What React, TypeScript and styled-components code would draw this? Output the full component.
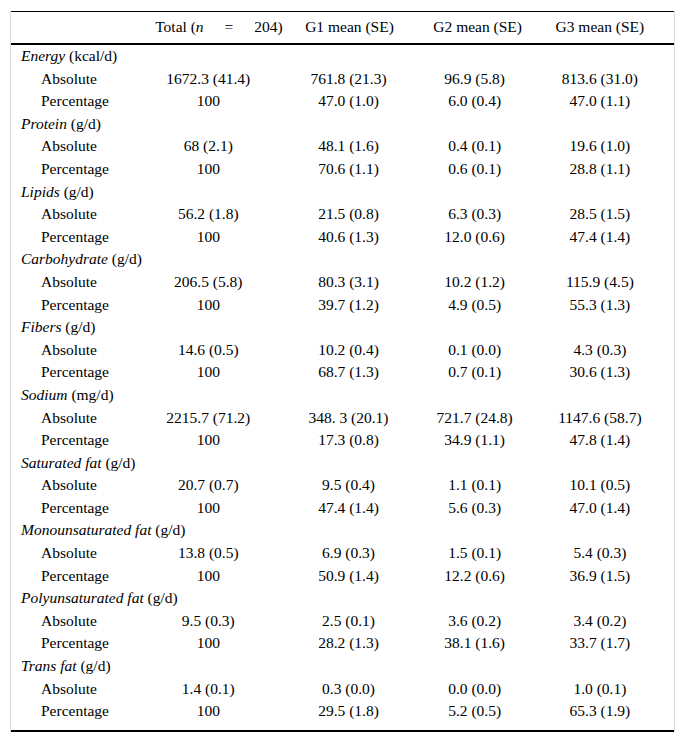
import React from "react";
import styled, { createGlobalStyle } from "styled-components";

const Global = createGlobalStyle`
  html, body { margin: 0; padding: 0; background: #fff; }
  body { font-family: "Liberation Serif", "Times New Roman", serif; color: #000; }
`;

const serif = `"Liberation Serif", "Times New Roman", serif`;

const Frame = styled.div`
  margin: 11px 0 0 10px;
  width: 663px;
  border-left: 1px solid #dcdcdc;
  border-right: 1px solid #dcdcdc;
`;

const Table = styled.table`
  width: 100%;
  border-collapse: collapse;
  table-layout: fixed;
  font-family: ${serif};
  font-size: 15.5px;
  color: #000;
  border-top: 1px solid #000;
`;

const HeadRow = styled.tr`
  border-bottom: 2px solid #000;
`;

const Th = styled.th<{ $shift?: number; $left?: boolean }>`
  font-family: ${serif};
  font-size: 15.5px;
  font-weight: normal;
  text-align: ${(p) => (p.$left ? "left" : "center")};
  height: 30px;
  padding: 0 0 1px ${(p) => p.$shift ?? 0}px;
  white-space: nowrap;
`;

const Eq = styled.span`
  margin: 0 21px 0 21px;
`;

const Body = styled.tbody`
  &::after {
    content: "";
    display: table-row;
    height: 4px;
  }
`;

const Td = styled.td<{ $indent?: number }>`
  font-family: ${serif};
  font-size: 15.5px;
  line-height: 22.6px;
  height: 22.6px;
  padding: 0 0 0 ${(p) => p.$indent ?? 0}px;
  text-align: ${(p) => (p.$indent ? "left" : "center")};
  white-space: nowrap;
`;

const Bottom = styled.div`
  height: 0;
  border-bottom: 2px solid #000;
  margin-top: 3px;
`;

type Group = { name: string; unit: string; abs: string[]; pct: string[] };

const groups: Group[] = [
  { name: "Energy", unit: "(kcal/d)", abs: ["1672.3 (41.4)", "761.8 (21.3)", "96.9 (5.8)", "813.6 (31.0)"], pct: ["100", "47.0 (1.0)", "6.0 (0.4)", "47.0 (1.1)"] },
  { name: "Protein", unit: "(g/d)", abs: ["68 (2.1)", "48.1 (1.6)", "0.4 (0.1)", "19.6 (1.0)"], pct: ["100", "70.6 (1.1)", "0.6 (0.1)", "28.8 (1.1)"] },
  { name: "Lipids", unit: "(g/d)", abs: ["56.2 (1.8)", "21.5 (0.8)", "6.3 (0.3)", "28.5 (1.5)"], pct: ["100", "40.6 (1.3)", "12.0 (0.6)", "47.4 (1.4)"] },
  { name: "Carbohydrate", unit: "(g/d)", abs: ["206.5 (5.8)", "80.3 (3.1)", "10.2 (1.2)", "115.9 (4.5)"], pct: ["100", "39.7 (1.2)", "4.9 (0.5)", "55.3 (1.3)"] },
  { name: "Fibers", unit: "(g/d)", abs: ["14.6 (0.5)", "10.2 (0.4)", "0.1 (0.0)", "4.3 (0.3)"], pct: ["100", "68.7 (1.3)", "0.7 (0.1)", "30.6 (1.3)"] },
  { name: "Sodium", unit: "(mg/d)", abs: ["2215.7 (71.2)", "348. 3 (20.1)", "721.7 (24.8)", "1147.6 (58.7)"], pct: ["100", "17.3 (0.8)", "34.9 (1.1)", "47.8 (1.4)"] },
  { name: "Saturated fat", unit: "(g/d)", abs: ["20.7 (0.7)", "9.5 (0.4)", "1.1 (0.1)", "10.1 (0.5)"], pct: ["100", "47.4 (1.4)", "5.6 (0.3)", "47.0 (1.4)"] },
  { name: "Monounsaturated fat", unit: "(g/d)", abs: ["13.8 (0.5)", "6.9 (0.3)", "1.5 (0.1)", "5.4 (0.3)"], pct: ["100", "50.9 (1.4)", "12.2 (0.6)", "36.9 (1.5)"] },
  { name: "Polyunsaturated fat", unit: "(g/d)", abs: ["9.5 (0.3)", "2.5 (0.1)", "3.6 (0.2)", "3.4 (0.2)"], pct: ["100", "28.2 (1.3)", "38.1 (1.6)", "33.7 (1.7)"] },
  { name: "Trans fat", unit: "(g/d)", abs: ["1.4 (0.1)", "0.3 (0.0)", "0.0 (0.0)", "1.0 (0.1)"], pct: ["100", "29.5 (1.8)", "5.2 (0.5)", "65.3 (1.9)"] },
];

export default function App() {
  return (
    <>
      <Global />
      <Frame>
        <Table>
          <colgroup>
            <col style={{ width: 132 }} />
            <col style={{ width: 130 }} />
            <col style={{ width: 150 }} />
            <col style={{ width: 102 }} />
            <col style={{ width: 148 }} />
          </colgroup>
          <thead>
            <HeadRow>
              <Th />
              <Th $left $shift={12}>
                Total (<i>n</i>
                <Eq>=</Eq>204)
              </Th>
              <Th $shift={2}>G1 mean (SE)</Th>
              <Th $shift={6}>G2 mean (SE)</Th>
              <Th $shift={0}>G3 mean (SE)</Th>
            </HeadRow>
          </thead>
          <Body>
            {groups.map((g) => (
              <React.Fragment key={g.name}>
                <tr>
                  <Td $indent={10} colSpan={5}>
                    <i>{g.name}</i> {g.unit}
                  </Td>
                </tr>
                <tr>
                  <Td $indent={30}>Absolute</Td>
                  {g.abs.map((v, i) => (
                    <Td key={i}>{v}</Td>
                  ))}
                </tr>
                <tr>
                  <Td $indent={30}>Percentage</Td>
                  {g.pct.map((v, i) => (
                    <Td key={i}>{v}</Td>
                  ))}
                </tr>
              </React.Fragment>
            ))}
          </Body>
        </Table>
        <Bottom />
      </Frame>
    </>
  );
}
